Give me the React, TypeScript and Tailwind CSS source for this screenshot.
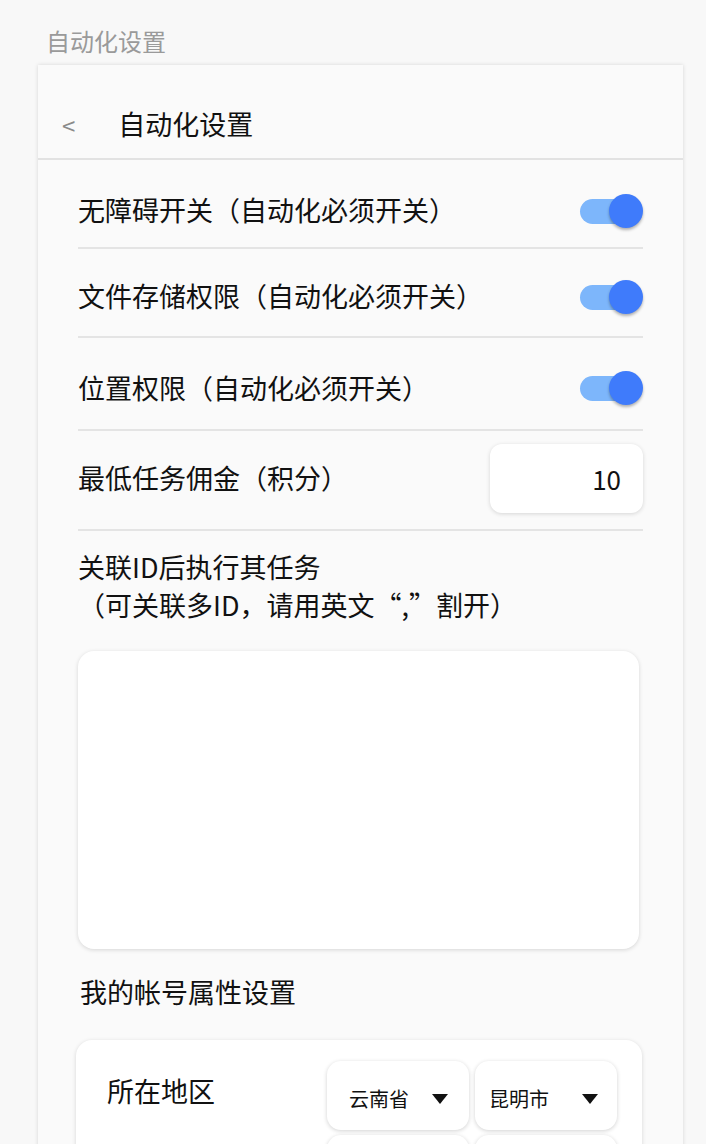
const font = { fontFamily: '"Noto Sans CJK SC", "Noto Sans", sans-serif' };

const Toggle = () => (
	<div className="relative h-[34px] w-[64px]">
		<div className="absolute left-[1px] top-[5px] h-[25px] w-[52px] rounded-full bg-[#7db6fb]" />
		<div className="absolute right-0 top-0 h-[34px] w-[34px] rounded-full bg-[#3f7bfb] shadow-[0_2px_3px_rgba(0,0,0,0.3)]" />
	</div>
);

const Arrow = () => (
	<svg width="16" height="10" viewBox="0 0 16 10">
		<polygon points="0,0 16,0 8,10" fill="#111" />
	</svg>
);

export default function App() {
	return (
		<div className="min-h-[1144px] bg-[#f8f8f8] text-[#111]" style={font}>
			<div className="pl-[46px] pt-[25px] text-[24px] leading-[32px] text-[#9a9a9a]">自动化设置</div>
			<div className="ml-[38px] mt-[8px] w-[645px] bg-[#fafafa] shadow-[0_0_4px_rgba(0,0,0,0.14)]">
				<div className="flex h-[95px] items-center border-b-2 border-[#e2e2e2] pt-[26px]">
					<span className="pl-[24px] text-[24px] text-[#8a8a8a]">&lt;</span>
					<span className="pl-[43px] text-[27px]">自动化设置</span>
				</div>
				<div className="px-[40px] text-[27px]">
					<div className="flex h-[89px] items-center justify-between border-b-2 border-[#e4e4e4] pt-[14px]">
						<span>无障碍开关（自动化必须开关）</span>
						<Toggle />
					</div>
					<div className="flex h-[89px] items-center justify-between border-b-2 border-[#e4e4e4] pt-[8px]">
						<span>文件存储权限（自动化必须开关）</span>
						<Toggle />
					</div>
					<div className="flex h-[93px] items-center justify-between border-b-2 border-[#e4e4e4] pt-[9px]">
						<span>位置权限（自动化必须开关）</span>
						<Toggle />
					</div>
					<div className="flex h-[100px] items-center justify-between border-b-2 border-[#e4e4e4] pb-[4px]">
						<span>最低任务佣金（积分）</span>
						<div className="flex h-[69px] w-[153px] items-center justify-end rounded-[12px] bg-white pr-[22px] text-[26px] shadow-[0_1px_4px_rgba(0,0,0,0.15)]">
							10
						</div>
					</div>
					<div className="pt-[17px] leading-[38px]">
						<div>关联ID后执行其任务</div>
						<div>（可关联多ID，请用英文“,”割开）</div>
					</div>
					<div className="mt-[27px] h-[298px] w-[561px] rounded-[16px] bg-white shadow-[0_1px_4px_rgba(0,0,0,0.15)]" />
					<div className="pl-[2px] pt-[25px] leading-[36px]">我的帐号属性设置</div>
					<div className="-ml-[2px] mt-[30px] w-[566px] rounded-t-[16px] bg-white pb-[20px] pl-[31px] pr-[25px] pt-[21px] shadow-[0_1px_4px_rgba(0,0,0,0.15)]">
						<div className="flex">
							<span className="w-[220px] pt-[12px] leading-[36px]">所在地区</span>
							<div className="flex flex-col gap-[5px]">
								<div className="flex gap-[6px]">
									<div className="flex h-[69px] w-[142px] items-center justify-between rounded-[14px] bg-white pb-[2px] pl-[22px] pr-[21px] pt-[8px] shadow-[0_1px_4px_rgba(0,0,0,0.18)]">
										<span className="text-[20px]">云南省</span>
										<Arrow />
									</div>
									<div className="flex h-[69px] w-[142px] items-center justify-between rounded-[14px] bg-white pb-[2px] pl-[14px] pr-[19px] pt-[8px] shadow-[0_1px_4px_rgba(0,0,0,0.18)]">
										<span className="text-[20px]">昆明市</span>
										<Arrow />
									</div>
								</div>
								<div className="flex gap-[6px]">
									<div className="h-[69px] w-[142px] rounded-[14px] bg-white shadow-[0_1px_4px_rgba(0,0,0,0.18)]" />
									<div className="h-[69px] w-[142px] rounded-[14px] bg-white shadow-[0_1px_4px_rgba(0,0,0,0.18)]" />
								</div>
							</div>
						</div>
					</div>
				</div>
			</div>
		</div>
	);
}
